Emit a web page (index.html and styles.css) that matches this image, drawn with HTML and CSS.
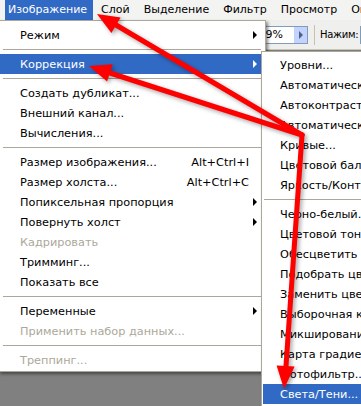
FILE: index.html
```html
<!DOCTYPE html>
<html lang="ru">
<head>
    <meta charset="UTF-8">
    <title>Изображение — Коррекция</title>
    <link rel="stylesheet" href="styles.css">
</head>
<body>

<!-- Menu bar -->
<div class="menubar">
    <div class="menubar-item open">Изображение</div>
    <div class="menubar-item">Слой</div>
    <div class="menubar-item">Выделение</div>
    <div class="menubar-item">Фильтр</div>
    <div class="menubar-item">Просмотр</div>
    <div class="menubar-item">Окно</div>
</div>

<!-- Options bar behind the menus -->
<div class="toolbar">
    <div class="field">
        <span class="field-value">39%</span>
        <span class="field-btn"></span>
    </div>
    <span class="tool-sep"></span>
    <span class="tool-label">Нажим:</span>
    <span class="field small"></span>
</div>

<!-- Image menu -->
<div class="menu main-menu">
    <div class="item"><span class="label">Режим</span><span class="sub"></span></div>
    <div class="sep"></div>
    <div class="item active"><span class="label">Коррекция</span><span class="sub"></span></div>
    <div class="sep"></div>
    <div class="item"><span class="label">Создать дубликат...</span></div>
    <div class="item"><span class="label">Внешний канал...</span></div>
    <div class="item"><span class="label">Вычисления...</span></div>
    <div class="sep"></div>
    <div class="item"><span class="label">Размер изображения...</span><span class="key">Alt+Ctrl+I</span></div>
    <div class="item"><span class="label">Размер холста...</span><span class="key">Alt+Ctrl+C</span></div>
    <div class="item"><span class="label">Попиксельная пропорция</span><span class="sub"></span></div>
    <div class="item"><span class="label">Повернуть холст</span><span class="sub"></span></div>
    <div class="item disabled"><span class="label">Кадрировать</span></div>
    <div class="item"><span class="label">Тримминг...</span></div>
    <div class="item"><span class="label">Показать все</span></div>
    <div class="sep"></div>
    <div class="item"><span class="label">Переменные</span><span class="sub"></span></div>
    <div class="item disabled"><span class="label">Применить набор данных...</span></div>
    <div class="sep"></div>
    <div class="item disabled"><span class="label">Треппинг...</span></div>
</div>

<!-- Adjustments submenu -->
<div class="menu sub-menu">
    <div class="item"><span class="label">Уровни...</span></div>
    <div class="item"><span class="label">Автоматическая тоновая коррекция</span></div>
    <div class="item"><span class="label">Автоконтраст</span></div>
    <div class="item"><span class="label">Автоматическая цветовая коррекция</span></div>
    <div class="item"><span class="label">Кривые...</span></div>
    <div class="item"><span class="label">Цветовой баланс...</span></div>
    <div class="item"><span class="label">Яркость/Контрастность...</span></div>
    <div class="sep"></div>
    <div class="item"><span class="label">Черно-белый...</span></div>
    <div class="item"><span class="label">Цветовой тон/Насыщенность...</span></div>
    <div class="item"><span class="label">Обесцветить</span></div>
    <div class="item"><span class="label">Подобрать цвет...</span></div>
    <div class="item"><span class="label">Заменить цвет...</span></div>
    <div class="item"><span class="label">Выборочная коррекция цвета...</span></div>
    <div class="item"><span class="label">Микширование каналов...</span></div>
    <div class="item"><span class="label">Карта градиента...</span></div>
    <div class="item"><span class="label">Фотофильтр...</span></div>
    <div class="item active"><span class="label">Света/Тени...</span></div>
</div>

<!-- Red pointer arrows drawn over the screenshot -->
<svg class="arrows" width="361" height="406" viewBox="0 0 361 406">
    <g stroke="#ff0000" stroke-width="5" stroke-linecap="round" fill="none">
        <line x1="302" y1="135" x2="116" y2="25"/>
        <line x1="302" y1="135" x2="110" y2="73"/>
        <line x1="302" y1="135" x2="286" y2="366"/>
    </g>
    <g fill="#ff0000">
        <polygon points="97,14 111.4,32.9 120.6,17.5"/>
        <polygon points="89,66 107.1,81.4 112.7,64.2"/>
        <polygon points="284,389 294.6,366.6 276.6,365.4"/>
    </g>
</svg>

</body>
</html>
```

FILE: styles.css
```css
html, body {
    margin: 0;
    padding: 0;
}

body {
    position: relative;
    width: 361px;
    height: 406px;
    overflow: hidden;
    background: #808080;
    font-family: "DejaVu Sans", Verdana, sans-serif;
    font-size: 11.3px;
    color: #000;
}

/* menu bar */
.menubar {
    display: flex;
    height: 20px;
    padding-left: 5px;
    background: #f3f3f1;
    font-size: 11px;
}

.menubar-item {
    padding: 0 6px 0 3px;
    margin-right: 5px;
    line-height: 20px;
    white-space: nowrap;
}

.menubar-item.open {
    background: #316ac5;
    color: #fff;
}

/* options bar */
.toolbar {
    display: flex;
    align-items: center;
    height: 29px;
    padding-left: 240px;
    background: #efefed;
    border-bottom: 1px solid #c9c7ba;
}

.field {
    display: flex;
    flex-shrink: 0;
    align-items: stretch;
    width: 66px;
    height: 16px;
    background: #fff;
    border: 1px solid #7f9db9;
}

.field-value {
    flex: 1;
    text-align: right;
    padding-right: 10px;
    line-height: 16px;
    font-size: 11px;
}

.field-btn {
    position: relative;
    width: 13px;
    background: #c3d3fd;
    border-left: 1px solid #fff;
}

.field-btn::after {
    content: "";
    position: absolute;
    left: 5px;
    top: 4px;
    border-left: 4px solid #4d6185;
    border-top: 4px solid transparent;
    border-bottom: 4px solid transparent;
}

.tool-sep {
    flex-shrink: 0;
    width: 1px;
    height: 20px;
    margin: 0 5px 0 6px;
    background: #c5c2b2;
}

.tool-label {
    flex-shrink: 0;
    font-size: 10px;
    letter-spacing: -0.3px;
    margin-right: 2px;
}

.field.small {
    width: 40px;
}

/* drop-down menus */
.menu {
    position: absolute;
    background: #fff;
    border: 1px solid #aca899;
    box-shadow: 2px 2px 3px rgba(0, 0, 0, 0.45);
}

.main-menu {
    left: -2px;
    top: 20px;
    width: 264px;
    padding: 4px 1px 1px 1px;
}

.sub-menu {
    left: 261px;
    top: 51px;
    width: 230px;
    padding: 3px 1px;
    z-index: 2;
}

.item {
    display: flex;
    align-items: center;
    height: 20px;
    padding: 0 7px 0 20px;
    white-space: nowrap;
}

.sub-menu .item {
    padding-left: 17px;
}

.item .label {
    flex: 1;
}

.item .key {
    margin-right: 8px;
}

.item .sub {
    width: 0;
    height: 0;
    border-left: 4px solid #000;
    border-top: 4px solid transparent;
    border-bottom: 4px solid transparent;
}

.item.active {
    background: #316ac5;
    color: #fff;
}

.item.active .sub {
    border-left-color: #fff;
}

.item.disabled {
    color: #aca899;
}

.sep {
    height: 1px;
    margin: 4px 3px 4px 3px;
    background: #aca899;
}

.sub-menu .sep {
    margin: 4px 0 4px 1px;
}

/* annotation arrows */
.arrows {
    position: absolute;
    left: 0;
    top: 0;
    z-index: 5;
    pointer-events: none;
    filter: drop-shadow(2px 2px 2px rgba(0, 0, 0, 0.35));
}
```
